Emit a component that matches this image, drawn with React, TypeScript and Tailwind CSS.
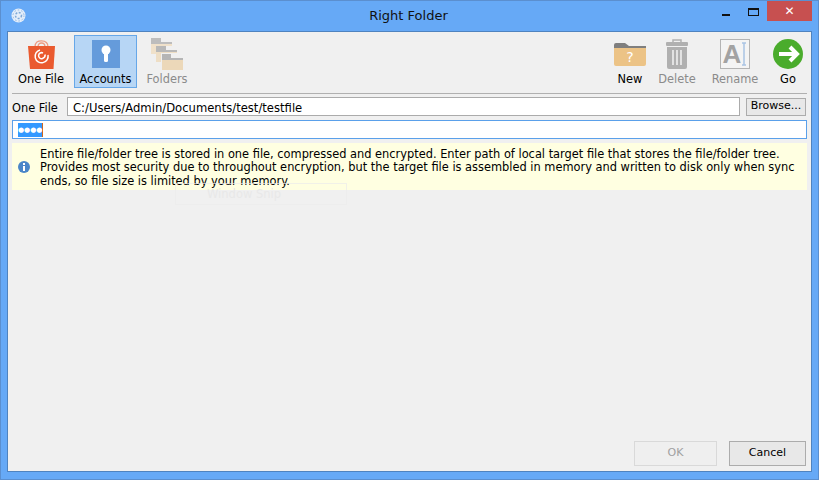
const FONT = "font-['DejaVu_Sans',sans-serif]";

function ShopIcon() {
  return (
    <svg width="27" height="29" viewBox="0 0 27 29">
      <path d="M7 7C7 2 10 .8 13.5.8S20 2 20 7M10 7c0-3 1.500-4 3.500-4S17 4 17 7" fill="none" stroke="#ee9a80" strokeWidth="1.300" />
      <path d="M0 6h27l-1.500 23H2Z" fill="#ea5a2f" />
      <path d="M12 10a6.500 6.500 0 1 0 8 5" fill="none" stroke="#fff" strokeWidth="1.500" />
      <path d="M15 13a3 3 0 1 0-.500 5.500c2 -.8 3-2 2.500-4" fill="none" stroke="#fff" strokeWidth="1.500" />
    </svg>
  );
}

function KeyIcon() {
  return (
    <svg width="28" height="28" viewBox="0 0 28 28">
      <rect width="28" height="28" fill="#659bdb" />
      <circle cx="14" cy="10" r="4.500" fill="#fff" />
      <rect x="12" y="10" width="4" height="12" rx="1.500" fill="#fff" />
    </svg>
  );
}

function FoldersIcon() {
  return (
    <svg width="32" height="32" viewBox="0 0 32 32">
      <path d="M0 0h10v4h11v2H0Z" fill="#bdbdbd" />
      <rect y="6" width="21" height="10" fill="#f0e1ca" />
      <rect x="5" y="8" width="21" height="12" fill="#f0f0f0" />
      <path d="M5 8h10v4h11v2H5Z" fill="#b8b8b8" />
      <rect x="5" y="14" width="21" height="10" fill="#eedec5" />
      <rect x="10" y="15" width="22" height="17" fill="#f0f0f0" />
      <path d="M11 16h9v4h12v2H11Z" fill="#b5b5b5" />
      <rect x="11" y="22" width="21" height="10" fill="#ecd8b9" />
    </svg>
  );
}

function NewIcon() {
  return (
    <svg width="32" height="23" viewBox="0 0 32 23">
      <path d="M0 2a2 2 0 0 1 2-2h9l4 3h17v3H0Z" fill="#7f7f7f" />
      <path d="M0 5h32v16a2 2 0 0 1-2 2H2a2 2 0 0 1-2-2Z" fill="#ecc386" />
      <text x="16" y="19" textAnchor="middle" fontSize="14" fill="#fff" fontFamily="DejaVu Sans">?</text>
    </svg>
  );
}

function TrashIcon() {
  return (
    <svg width="22" height="30" viewBox="0 0 22 30">
      <path d="M7 3V1h8v2" fill="none" stroke="#b0b0b0" strokeWidth="1.500" />
      <rect y="3" width="22" height="4" rx="1" fill="#b0b0b0" />
      <path d="M1 8h20v20a2 2 0 0 1-2 2H3a2 2 0 0 1-2-2Z" fill="#b0b0b0" />
      <path d="M7 11v15M11 11v15M15 11v15" stroke="#efefef" strokeWidth="1.600" />
    </svg>
  );
}

function RenameIcon() {
  return (
    <svg width="30" height="30" viewBox="0 0 30 30">
      <rect x=".5" y=".5" width="29" height="29" fill="#f4f4f4" stroke="#b4b4b4" />
      <text x="12" y="24" textAnchor="middle" fontSize="26" fontWeight="700" fill="#a3a3a3" fontFamily="Liberation Sans">A</text>
      <path d="M22 4h4M24 4v22M22 26h4" fill="none" stroke="#a9c4e4" strokeWidth="1.500" />
    </svg>
  );
}

function GoIcon() {
  return (
    <svg width="30" height="30" viewBox="0 0 30 30">
      <circle cx="15" cy="15" r="15" fill="#4aac2c" />
      <path d="M6 15h17M17 8l7 7-7 7" fill="none" stroke="#fff" strokeWidth="4" />
    </svg>
  );
}

function ToolButton({ label, icon, active, muted, width }: { label: string; icon: React.ReactNode; active?: boolean; muted?: boolean; width: string }) {
  return (
    <div className={`flex h-[53px] ${width} flex-col items-center justify-between border pb-[1px] pt-[2px] ${active ? "border-[#66a7e8] bg-[#b7d6f5]" : "border-transparent"}`}>
      <div className="flex h-[32px] items-center justify-center">{icon}</div>
      <span className={`text-[11.400px] leading-[14px] ${muted ? "text-[#8b8b8b]" : "text-black"}`}>{label}</span>
    </div>
  );
}

export default function App() {
  return (
    <div className={`flex h-[480px] w-[819px] flex-col overflow-hidden border border-[#5b8fcf] bg-[#66a9f6] ${FONT}`}>
      <div className="flex h-[30px] shrink-0 items-start pl-[10px]">
        <svg className="mt-[7px]" width="15" height="15" viewBox="0 0 15 15">
          <circle cx="7.500" cy="7.500" r="7" fill="#e4eefa" />
          <circle cx="7.500" cy="7.500" r="3" fill="none" stroke="#7fa9d8" strokeWidth="1.500" strokeDasharray="2 1.500" />
          <circle cx="7.500" cy="7.500" r="5.500" fill="none" stroke="#8fb5e0" strokeWidth="1" strokeDasharray="1.500 2" />
        </svg>
        <div className="flex-1 pl-[69px] pt-[7px] text-center text-[13px] leading-[16px] text-[#111]">Right Folder</div>
        <div className="flex items-start">
          <div className="mr-[18px] mt-[13px] h-[2px] w-[8px] bg-[#111]" />
          <div className="mr-[8px] mt-[7px] h-[8px] w-[11px] border border-t-2 border-[#111]" />
          <div className="mr-[6px] flex h-[20px] w-[45px] items-center justify-center bg-[#c75050] text-[12px] font-bold leading-none text-white">✕</div>
        </div>
      </div>
      <div className="mx-[6px] mb-[7px] flex min-h-0 flex-1 flex-col border border-[#4f83bf] bg-[#f0f0f0] px-[4px] pt-[3px]">
        <div className="flex h-[59px] shrink-0 items-start border-b border-[#b0b0b0]">
          <div className="flex gap-[4px]">
            <ToolButton label="One File" icon={<ShopIcon />} width="w-[58px]" />
            <ToolButton label="Accounts" icon={<KeyIcon />} active width="w-[63px]" />
            <ToolButton label="Folders" icon={<FoldersIcon />} muted width="w-[52px]" />
          </div>
          <div className="ml-auto flex pr-[1px]">
            <ToolButton label="New" icon={<NewIcon />} width="w-[48px]" />
            <ToolButton label="Delete" icon={<TrashIcon />} muted width="w-[46px]" />
            <ToolButton label="Rename" icon={<RenameIcon />} muted width="w-[70px]" />
            <ToolButton label="Go" icon={<GoIcon />} width="w-[36px]" />
          </div>
        </div>
        <div className="mt-[3px] flex h-[19px] shrink-0 items-center">
          <span className="w-[55px] pt-[3px] text-[11.400px] leading-[14px] text-black">One File</span>
          <div className="flex h-[19px] w-[673px] items-center border border-[#ababab] bg-white pl-[5px] pt-[2px] text-[11.600px] leading-[14px] text-black">C:/Users/Admin/Documents/test/testfile</div>
          <div className="ml-[6px] flex h-[18px] w-[60px] items-center justify-center border border-[#acacac] bg-[#e8e8e8] text-[11px] text-black">Browse...</div>
        </div>
        <div className="mt-[4px] flex h-[19px] shrink-0 items-center border border-[#5aa0ea] bg-white pl-[5px]">
          <span className="h-[14px] border-r border-[#d0661c] bg-[#3399ff] text-[7px] leading-[14px] text-white">●●●●</span>
        </div>
        <div className="mt-[4px] flex h-[47px] shrink-0 items-center bg-[#ffffe1]">
          <svg className="ml-[6px] mr-[10px] shrink-0" width="12" height="12" viewBox="0 0 12 12">
            <circle cx="6" cy="6" r="6" fill="#4a86c8" />
            <rect x="5" y="5" width="2" height="5" fill="#fff" />
            <rect x="5" y="2" width="2" height="2" fill="#fff" />
          </svg>
          <p className="pt-[3px] text-[11.400px] leading-[13.500px] text-black">
            Entire file/folder tree is stored in one file, compressed and encrypted. Enter path of local target file that stores the file/folder tree.<br />
            Provides most security due to throughout encryption, but the target file is assembled in memory and written to disk only when sync<br />
            ends, so file size is limited by your memory.
          </p>
        </div>
        <div className="relative min-h-0 flex-1">
          {/* leftover of a window behind, faint in the screenshot */}
          <div className="absolute left-[163px] top-[-7px] flex h-[22px] w-[172px] items-center border border-[#ebebeb]/70 pl-[31px] pt-[1px] text-[11.500px] text-[#e8e8e8]">Window Snip</div>
        </div>
        <div className="mb-[5px] flex shrink-0 justify-end gap-[12px] pr-[1px]">
          <div className="flex h-[25px] w-[83px] items-center justify-center border border-[#d9d9d9] bg-[#efefef] text-[11px] text-[#a0a0a0]">OK</div>
          <div className="flex h-[25px] w-[77px] items-center justify-center border border-[#acacac] bg-[#e8e8e8] text-[11px] text-black">Cancel</div>
        </div>
      </div>
    </div>
  );
}
